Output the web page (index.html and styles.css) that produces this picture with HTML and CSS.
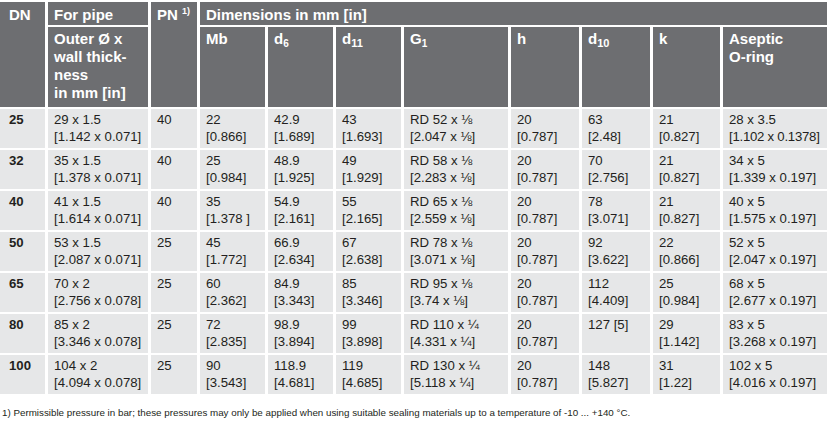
FILE: index.html
```html
<!DOCTYPE html>
<html lang="en">
<head>
<meta charset="utf-8">
<title>Dimensions table</title>
<link rel="stylesheet" href="styles.css">
</head>
<body>
<div class="wrap">
<table class="dims">
  <colgroup>
    <col class="c-dn"><col class="c-pipe"><col class="c-pn"><col class="c-mb"><col class="c-d6"><col class="c-d11"><col class="c-g1"><col class="c-h"><col class="c-d10"><col class="c-k"><col class="c-or">
  </colgroup>
  <thead>
    <tr class="h1">
      <th rowspan="2" class="dn">DN</th>
      <th>For pipe</th>
      <th rowspan="2">PN <sup class="fn">1)</sup></th>
      <th colspan="8">Dimensions in mm [in]</th>
    </tr>
    <tr class="h2">
      <th>Outer Ø x<br>wall thick-<br>ness<br>in mm [in]</th>
      <th>Mb</th>
      <th>d<sub class="s-sm">6</sub></th>
      <th>d<sub>11</sub></th>
      <th>G<sub class="s-sm">1</sub></th>
      <th>h</th>
      <th>d<sub>10</sub></th>
      <th>k</th>
      <th>Aseptic<br>O-ring</th>
    </tr>
  </thead>
  <tbody>
    <tr><td class="dn">25</td><td>29 x 1.5<br>[1.142 x 0.071]</td><td>40</td><td>22<br>[0.866]</td><td>42.9<br>[1.689]</td><td>43<br>[1.693]</td><td>RD 52 x ⅛<br>[2.047 x ⅛]</td><td>20<br>[0.787]</td><td>63<br>[2.48]</td><td>21<br>[0.827]</td><td>28 x 3.5<br><span class="tight">[1.102 x 0.1378]</span></td></tr>
    <tr><td class="dn">32</td><td>35 x 1.5<br>[1.378 x 0.071]</td><td>40</td><td>25<br>[0.984]</td><td>48.9<br>[1.925]</td><td>49<br>[1.929]</td><td>RD 58 x ⅛<br>[2.283 x ⅛]</td><td>20<br>[0.787]</td><td>70<br>[2.756]</td><td>21<br>[0.827]</td><td>34 x 5<br>[1.339 x 0.197]</td></tr>
    <tr><td class="dn">40</td><td>41 x 1.5<br>[1.614 x 0.071]</td><td>40</td><td>35<br>[1.378 ]</td><td>54.9<br>[2.161]</td><td>55<br>[2.165]</td><td>RD 65 x ⅛<br>[2.559 x ⅛]</td><td>20<br>[0.787]</td><td>78<br>[3.071]</td><td>21<br>[0.827]</td><td>40 x 5<br>[1.575 x 0.197]</td></tr>
    <tr><td class="dn">50</td><td>53 x 1.5<br>[2.087 x 0.071]</td><td>25</td><td>45<br>[1.772]</td><td>66.9<br>[2.634]</td><td>67<br>[2.638]</td><td>RD 78 x ⅛<br>[3.071 x ⅛]</td><td>20<br>[0.787]</td><td>92<br>[3.622]</td><td>22<br>[0.866]</td><td>52 x 5<br>[2.047 x 0.197]</td></tr>
    <tr><td class="dn">65</td><td>70 x 2<br>[2.756 x 0.078]</td><td>25</td><td>60<br>[2.362]</td><td>84.9<br>[3.343]</td><td>85<br>[3.346]</td><td>RD 95 x ⅛<br>[3.74 x ⅛]</td><td>20<br>[0.787]</td><td>112<br>[4.409]</td><td>25<br>[0.984]</td><td>68 x 5<br>[2.677 x 0.197]</td></tr>
    <tr><td class="dn">80</td><td>85 x 2<br>[3.346 x 0.078]</td><td>25</td><td>72<br>[2.835]</td><td>98.9<br>[3.894]</td><td>99<br>[3.898]</td><td>RD 110 x ¼<br>[4.331 x ¼]</td><td>20<br>[0.787]</td><td>127 [5]</td><td>29<br>[1.142]</td><td>83 x 5<br>[3.268 x 0.197]</td></tr>
    <tr><td class="dn">100</td><td>104 x 2<br>[4.094 x 0.078]</td><td>25</td><td>90<br>[3.543]</td><td>118.9<br>[4.681]</td><td>119<br>[4.685]</td><td>RD 130 x ¼<br>[5.118 x ¼]</td><td>20<br>[0.787]</td><td>148<br>[5.827]</td><td>31<br>[1.22]</td><td>102 x 5<br>[4.016 x 0.197]</td></tr>
  </tbody>
</table>
<p class="note">1) Permissible pressure in bar; these pressures may only be applied when using suitable sealing materials up to a temperature of -10 ... +140 °C.</p>
</div>
</body>
</html>
```
FILE: styles.css
```css
html, body {
  margin: 0;
  padding: 0;
  background: #ffffff;
  overflow: hidden;
}
.wrap {
  width: 827px;
  overflow: hidden;
  font-family: "Liberation Sans", Arial, sans-serif;
}
.dims {
  table-layout: fixed;
  border-collapse: separate;
  border-spacing: 3px 2px;
  width: 833px;
  margin: 0 0 0 -3px;
  color: #231f20;
}
.c-dn { width: 45px; }
.c-pipe { width: 100px; }
.c-pn { width: 46px; }
.c-mb { width: 65px; }
.c-d6 { width: 65px; }
.c-d11 { width: 65px; }
.c-g1 { width: 104px; }
.c-h { width: 68px; }
.c-d10 { width: 68px; }
.c-k { width: 67px; }
.c-or { width: 104px; }

.dims th {
  background: #6d6e71;
  color: #ffffff;
  font-weight: bold;
  font-size: 15px;
  line-height: 18px;
  text-align: left;
  vertical-align: top;
  padding: 4px 4px 1px 6px;
}
.dims .h1 th { height: 18px; }
.dims .h2 th {
  padding-top: 3px;
  padding-bottom: 4px;
  height: 73px;
}
.dims th.dn { padding-left: 9px; }
.dims sub {
  font-size: 11px;
  line-height: 0;
  vertical-align: -3px;
}
.dims sub.s-sm { font-size: 10px; }
.dims sup.fn {
  font-size: 9px;
  line-height: 0;
  vertical-align: 6px;
}
.dims td {
  background: #e6e7e8;
  font-size: 13.2px;
  line-height: 16.5px;
  vertical-align: top;
  padding: 3px 2px 3px 6px;
  height: 33px;
  white-space: nowrap;
}
.dims td.dn {
  font-weight: bold;
  padding-left: 9px;
}
.tight { letter-spacing: -0.25px; }
.note {
  margin: 11px 0 0 2px;
  font-size: 9.8px;
  line-height: 12px;
  color: #231f20;
}
```
